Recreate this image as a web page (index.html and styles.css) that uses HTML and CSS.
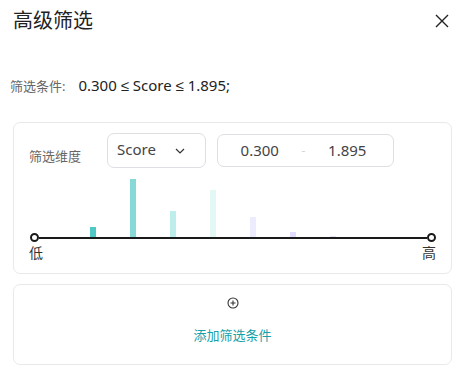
FILE: index.html
```html
<!DOCTYPE html>
<html lang="zh-CN">
<head>
    <meta charset="UTF-8">
    <meta name="viewport" content="width=device-width, initial-scale=1.0">
    <title>高级筛选</title>
    <link rel="stylesheet" href="styles.css">
</head>
<body>
    <div class="dialog">
        <div class="header">
            <h1>高级筛选</h1>
            <button class="close" aria-label="关闭">
                <svg width="14" height="14" viewBox="0 0 14 14"><path d="M1 1L13 13M13 1L1 13" stroke="#222" stroke-width="1.4" fill="none"/></svg>
            </button>
        </div>

        <div class="condition">
            <span class="condition-label">筛选条件:</span>
            <span class="condition-value">0.300 <span class="op">≤</span> Score <span class="op">≤</span> 1.895;</span>
        </div>

        <div class="card">
            <div class="filter-row">
                <span class="filter-label">筛选维度</span>
                <div class="select">
                    <span>Score</span>
                    <svg width="10" height="6" viewBox="0 0 10 6"><path d="M1 1L5 5L9 1" stroke="#333" stroke-width="1.2" fill="none"/></svg>
                </div>
                <div class="range">
                    <span class="range-input">0.300</span>
                    <span class="range-sep">-</span>
                    <span class="range-input">1.895</span>
                </div>
            </div>

            <div class="chart">
                <div class="bars">
                    <div class="bar" style="height: 10px; background: #4fc9c5;"></div>
                    <div class="bar" style="height: 58px; background: #86d9d7;"></div>
                    <div class="bar" style="height: 26px; background: #beeeeb;"></div>
                    <div class="bar" style="height: 47px; background: #e3f7f5;"></div>
                    <div class="bar" style="height: 20px; background: #edecff;"></div>
                    <div class="bar" style="height: 5px; background: #e0ddff;"></div>
                    <div class="bar" style="height: 1px; background: #e4e2ff;"></div>
                </div>
                <div class="axis">
                    <span class="dot"></span>
                    <span class="line"></span>
                    <span class="dot"></span>
                </div>
                <div class="axis-labels">
                    <span>低</span>
                    <span>高</span>
                </div>
            </div>
        </div>

        <div class="card add-card">
            <svg width="12" height="12" viewBox="0 0 12 12">
                <circle cx="6" cy="6" r="5" stroke="#333" stroke-width="1.1" fill="none"/>
                <path d="M6 3.5V8.5M3.5 6H8.5" stroke="#333" stroke-width="1.1"/>
            </svg>
            <span class="add-text">添加筛选条件</span>
        </div>
    </div>
</body>
</html>
```

FILE: styles.css
```css
* {
    box-sizing: border-box;
}

body {
    margin: 0;
    background-color: #fff;
    font-family: "Noto Sans", "Noto Sans CJK SC", sans-serif;
    color: #333;
}

.dialog {
    padding: 0 16px 0 13px;
}

.header {
    height: 42px;
    display: flex;
    align-items: center;
    justify-content: space-between;
}

h1 {
    margin: 0;
    font-size: 20px;
    font-weight: 400;
    color: #222;
    line-height: 28px;
}

.close {
    border: none;
    background: none;
    padding: 0;
    margin-right: 3px;
    width: 14px;
    height: 14px;
    display: flex;
    cursor: pointer;
}

.condition {
    margin: 33px 0 0 -3px;
    line-height: 20px;
    font-size: 15px;
}

.condition-label {
    font-size: 13px;
    color: #666;
    margin-right: 9px;
}

.condition-value {
    color: #222;
}

.op {
    font-family: "Liberation Sans", sans-serif;
}

.card {
    margin-top: 26px;
    border: 1px solid #e9e9ec;
    border-radius: 7px;
    padding: 10px 15px 10px 15px;
}

.filter-row {
    display: flex;
    align-items: flex-start;
}

.filter-label {
    font-size: 13px;
    color: #666;
    line-height: 18px;
    margin-top: 14px;
    width: 78px;
}

.select {
    width: 99px;
    height: 35px;
    border: 1px solid #dedee3;
    border-radius: 7px;
    padding: 0 20px 0 9px;
    display: flex;
    align-items: center;
    justify-content: space-between;
    font-size: 15px;
    color: #444;
}

.select span {
    margin-top: -3px;
}

.range {
    margin-left: 11px;
    width: 177px;
    height: 33px;
    margin-top: 1px;
    border: 1px solid #dedee3;
    border-radius: 7px;
    display: flex;
    align-items: center;
    font-size: 15px;
    color: #444;
}

.range-input {
    flex: 1;
    text-align: center;
    margin-top: -2px;
}

.range-input:last-child {
    padding-right: 4px;
}

.range-sep {
    color: #d4d4d8;
    font-size: 12px;
}

.chart {
    margin-top: 11px;
}

.bars {
    height: 58px;
    display: flex;
    align-items: flex-end;
    gap: 34px;
    padding-left: 61px;
}

.bar {
    width: 6px;
}

.axis {
    display: flex;
    align-items: center;
    margin-top: -4px;
    padding-left: 1px;
}

.dot {
    width: 9px;
    height: 9px;
    border: 2px solid #1a1a1a;
    border-radius: 50%;
    background: #fff;
}

.line {
    flex: 1;
    height: 2px;
    background: #1a1a1a;
}

.axis-labels {
    display: flex;
    justify-content: space-between;
    font-size: 14px;
    line-height: 20px;
    margin-top: 1px;
    color: #333;
}

.add-card {
    margin-top: 10px;
    height: 81px;
    padding: 12px 15px 4px;
    display: flex;
    flex-direction: column;
    align-items: center;
}

.add-text {
    margin-top: 17px;
    font-size: 13px;
    line-height: 18px;
    color: #16a0a8;
}
```
